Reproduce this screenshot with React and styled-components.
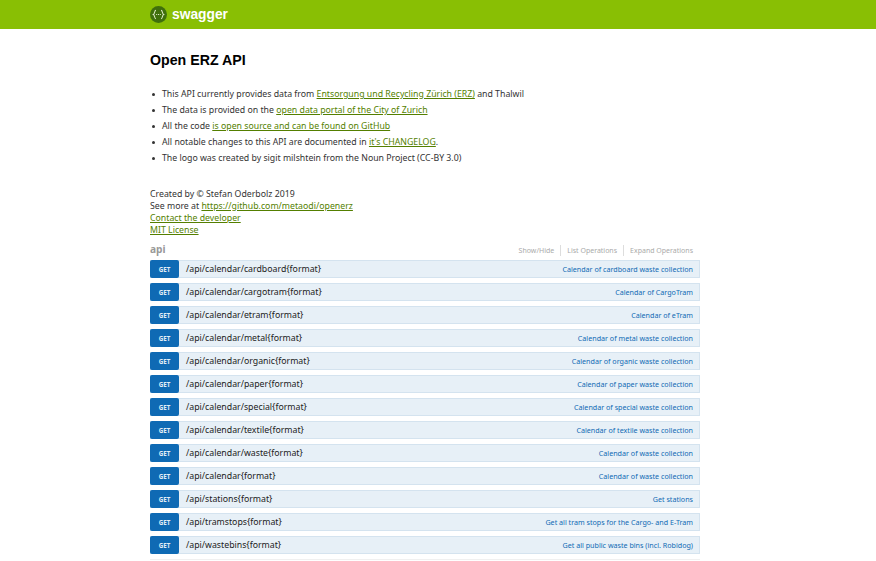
import React from "react";
import styled, { createGlobalStyle } from "styled-components";

const GlobalStyle = createGlobalStyle`
  html, body {
    margin: 0;
    padding: 0;
    background: #fff;
    font-family: "Noto Sans", "Open Sans", sans-serif;
    color: #333;
  }
`;

const Header = styled.header`
  background: #89bf04;
  height: 29px;
  padding-left: 150px;
  display: flex;
  align-items: center;
  gap: 5px;
`;

const Brand = styled.span`
  font-family: "Liberation Sans", Arial, sans-serif;
  font-weight: bold;
  font-size: 13.8px;
  color: #fff;
`;

const Container = styled.main`
  width: 550px;
  margin-left: 150px;
`;

const Title = styled.h1`
  font-family: "Liberation Sans", Arial, sans-serif;
  font-size: 14.2px;
  font-weight: bold;
  color: #000;
  margin: 0;
  padding-top: 22px;
  line-height: 18px;
`;

const Notes = styled.ul`
  margin: 17px 0 0;
  padding: 0 0 0 2px;
  list-style: none;
`;

const Note = styled.li`
  font-size: 8.75px;
  line-height: 16px;
  color: #333;
  &::before {
    content: "";
    display: inline-block;
    width: 3px;
    height: 3px;
    border-radius: 50%;
    background: #333;
    margin-right: 7px;
    vertical-align: middle;
  }
`;

const Link = styled.a`
  color: #547f00;
  text-decoration: underline;
`;

const Credits = styled.div`
  margin-top: 22px;
  font-size: 8.75px;
  line-height: 12px;
  color: #333;
`;

const ResourceHead = styled.div`
  display: flex;
  justify-content: space-between;
  align-items: center;
  height: 18px;
  margin-top: 4px;
`;

const ResourceName = styled.span`
  font-size: 10.2px;
  font-weight: bold;
  color: #999;
`;

const ResourceActions = styled.div`
  display: flex;
  align-items: center;
  padding: 2px 7px 0 0;
`;

const ResourceAction = styled.span`
  font-size: 7px;
  color: #aaa;
  padding: 0 6px;
  line-height: 11px;
  border-left: ${(p) => (p.$first ? "none" : "1px solid #ddd")};
  &:last-child {
    padding-right: 0;
  }
`;

const Operations = styled.div`
  display: flex;
  flex-direction: column;
  gap: 5px;
  margin-top: 2px;
`;

const Operation = styled.div`
  box-sizing: border-box;
  display: flex;
  align-items: stretch;
  height: 18px;
  background: #e7f0f7;
  border: 1px solid #d4e3ef;
`;

const Method = styled.span`
  width: 29px;
  background: #0f6ab4;
  color: #e4eef7;
  font-size: 6.2px;
  font-weight: bold;
  display: flex;
  align-items: center;
  justify-content: center;
  margin: -1px 0 -1px -1px;
  border-radius: 2px;
`;

const Path = styled.span`
  flex: 1;
  padding-left: 7px;
  font-size: 8.75px;
  line-height: 17px;
  color: #222;
`;

const Summary = styled.span`
  font-size: 7.15px;
  line-height: 16px;
  color: #0f6ab4;
  padding-right: 6px;
`;

const FooterStrip = styled.div`
  height: 1px;
  background: #f0f0f0;
  margin-top: 5px;
`;

const SwaggerLogo = () => (
  <svg width="17" height="17" viewBox="0 0 17 17" aria-hidden="true">
    <circle cx="8.5" cy="8.5" r="8.5" fill="#3f6f0c" />
    <g fill="none" stroke="#dfe9c8" strokeWidth="1.1">
      <path d="M6 4.2C4.2 4.2 5 7.8 3.4 8.5C5 9.2 4.2 12.8 6 12.8" />
      <path d="M11 4.2C12.8 4.2 12 7.8 13.6 8.5C12 9.2 12.8 12.8 11 12.8" />
    </g>
    <path d="M6.2 8.5h4.6" stroke="#dfe9c8" strokeWidth="1" strokeDasharray="1 .8" />
  </svg>
);

const operations = [
  ["/api/calendar/cardboard{format}", "Calendar of cardboard waste collection"],
  ["/api/calendar/cargotram{format}", "Calendar of CargoTram"],
  ["/api/calendar/etram{format}", "Calendar of eTram"],
  ["/api/calendar/metal{format}", "Calendar of metal waste collection"],
  ["/api/calendar/organic{format}", "Calendar of organic waste collection"],
  ["/api/calendar/paper{format}", "Calendar of paper waste collection"],
  ["/api/calendar/special{format}", "Calendar of special waste collection"],
  ["/api/calendar/textile{format}", "Calendar of textile waste collection"],
  ["/api/calendar/waste{format}", "Calendar of waste collection"],
  ["/api/calendar{format}", "Calendar of waste collection"],
  ["/api/stations{format}", "Get stations"],
  ["/api/tramstops{format}", "Get all tram stops for the Cargo- and E-Tram"],
  ["/api/wastebins{format}", "Get all public waste bins (incl. Robidog)"],
];

const App = () => {
  return (
    <>
      <GlobalStyle />
      <Header>
        <SwaggerLogo />
        <Brand>swagger</Brand>
      </Header>
      <Container>
        <Title>Open ERZ API</Title>
        <Notes>
          <Note>
            This API currently provides data from{" "}
            <Link href="#">Entsorgung und Recycling Zürich (ERZ)</Link> and Thalwil
          </Note>
          <Note>
            The data is provided on the{" "}
            <Link href="#">open data portal of the City of Zurich</Link>
          </Note>
          <Note>
            All the code <Link href="#">is open source and can be found on GitHub</Link>
          </Note>
          <Note>
            All notable changes to this API are documented in{" "}
            <Link href="#">it's CHANGELOG</Link>.
          </Note>
          <Note>The logo was created by sigit milshtein from the Noun Project (CC-BY 3.0)</Note>
        </Notes>
        <Credits>
          Created by © Stefan Oderbolz 2019
          <br />
          See more at <Link href="#">https://github.com/metaodi/openerz</Link>
          <br />
          <Link href="#">Contact the developer</Link>
          <br />
          <Link href="#">MIT License</Link>
        </Credits>
        <ResourceHead>
          <ResourceName>api</ResourceName>
          <ResourceActions>
            <ResourceAction $first>Show/Hide</ResourceAction>
            <ResourceAction>List Operations</ResourceAction>
            <ResourceAction>Expand Operations</ResourceAction>
          </ResourceActions>
        </ResourceHead>
        <Operations>
          {operations.map(([path, summary]) => (
            <Operation key={path}>
              <Method>GET</Method>
              <Path>{path}</Path>
              <Summary>{summary}</Summary>
            </Operation>
          ))}
        </Operations>
        <FooterStrip />
      </Container>
    </>
  );
};

export default App;
